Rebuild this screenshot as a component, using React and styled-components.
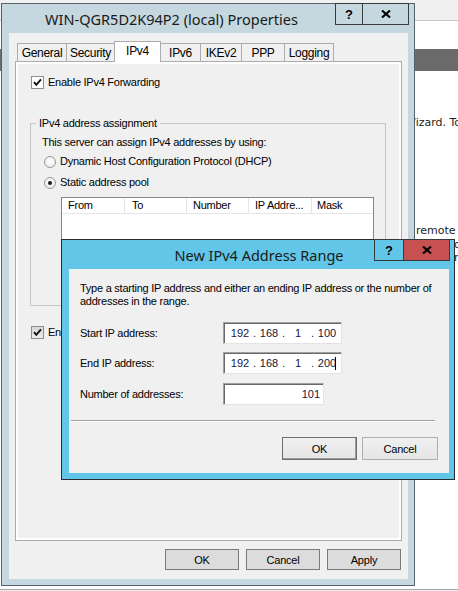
import React from "react";
import styled, { createGlobalStyle } from "styled-components";

const UI = `"Liberation Sans", Arial, sans-serif`;
const TITLE = `"Noto Sans", "Open Sans", sans-serif`;

const GlobalStyle = createGlobalStyle`
  html, body { margin: 0; padding: 0; background: #fff; }
  body { font-family: ${UI}; font-size: 11px; color: #000; }
  * { box-sizing: border-box; }
`;

/* ---------- desktop behind ---------- */
const Desktop = styled.div`
  position: relative;
  width: 458px;
  height: 591px;
  overflow: hidden;
  background: #fff;
  display: flex;
  flex-direction: column;
`;
const TopStrip = styled.div`
  flex: none;
  height: 21px;
  background: #f0f0f0;
  border-bottom: 1px solid #c9c9c9;
`;
const Spacer = styled.div`
  flex: none;
  height: ${(p) => p.$h}px;
`;
const DarkBar = styled.div`
  flex: none;
  height: 22px;
  background: #6b6b6b;
`;
const BgBody = styled.div`
  flex: 1;
  display: flex;
  flex-direction: column;
  font-family: "DejaVu Sans", sans-serif;
  font-size: 11px;
  line-height: 13px;
  color: #1e1e1e;
`;
const BgText = styled.div`
  margin-top: ${(p) => p.$mt}px;
  padding-left: ${(p) => p.$ml}px;
  white-space: nowrap;
  overflow: hidden;
`;
const BgFooter = styled.div`
  margin-top: auto;
  height: 2px;
  border-top: 1px solid #a8a8a8;
  background: #f0f0f0;
`;

/* ---------- windows ---------- */
const Window = styled.div`
  position: absolute;
  left: ${(p) => p.$x}px;
  top: ${(p) => p.$y}px;
  width: ${(p) => p.$w}px;
  height: ${(p) => p.$h}px;
  border: 1px solid ${(p) => p.$edge};
  background: ${(p) => p.$frame};
  padding: 0 ${(p) => p.$pr}px ${(p) => p.$pb}px ${(p) => p.$pl}px;
  display: flex;
  flex-direction: column;
`;
const TitleBar = styled.div`
  flex: none;
  height: 29px;
  display: flex;
  align-items: center;
  justify-content: center;
  padding-right: ${(p) => p.$pr || 0}px;
  font-family: ${TITLE};
  font-size: 14.5px;
  color: #1b1b1b;
  white-space: nowrap;
`;
const CaptionButtons = styled.div`
  position: absolute;
  top: -1px;
  right: ${(p) => p.$right}px;
  display: flex;
`;
const CaptionButton = styled.div`
  width: ${(p) => p.$w}px;
  height: 22px;
  border: 1px solid #3a3a3a;
  background: ${(p) => p.$bg};
  display: flex;
  align-items: center;
  justify-content: center;
  font-family: ${UI};
  font-weight: bold;
  font-size: 13px;
  color: #000;
  & + & {
    margin-left: -1px;
  }
`;

const CloseGlyph = () => (
  <svg width="10" height="8" viewBox="0 0 10 8">
    <path d="M1 0.5 L9 7.5 M9 0.5 L1 7.5" stroke="#000" strokeWidth="2.1" />
  </svg>
);

const Client = styled.div`
  flex: 1;
  background: #f0f0f0;
  display: flex;
  flex-direction: column;
  padding: ${(p) => p.$pad};
`;

/* ---------- tabs ---------- */
const TabStrip = styled.div`
  flex: none;
  height: 20px;
  display: flex;
  align-items: flex-end;
  padding-left: 2px;
`;
const Tab = styled.div`
  position: relative;
  width: ${(p) => p.$w}px;
  height: ${(p) => (p.$active ? 21 : 18)}px;
  margin-bottom: ${(p) => (p.$active ? -1 : 0)}px;
  z-index: ${(p) => (p.$active ? 2 : 1)};
  border: 1px solid #acacac;
  border-bottom: none;
  background: ${(p) => (p.$active ? "#fff" : "#f0f0f0")};
  display: flex;
  align-items: center;
  justify-content: center;
  padding-bottom: ${(p) => (p.$active ? 3 : 0)}px;
  font-size: 12px;
  letter-spacing: -0.3px;
  & + & {
    margin-left: -1px;
  }
`;
const Panel = styled.div`
  flex: none;
  height: 480px;
  border: 1px solid #acacac;
  background: #f0f0f0;
  box-shadow: inset 0 0 0 2px #fff;
  padding: 14px 0 0 14px;
  display: flex;
  flex-direction: column;
`;

/* ---------- controls ---------- */
const Label = styled.span`
  font-size: 11px;
  line-height: 13px;
  letter-spacing: -0.25px;
  white-space: nowrap;
`;
const CheckRow = styled.div`
  display: flex;
  align-items: center;
  gap: 4px;
  height: 13px;
  margin-left: 1px;
  margin-top: ${(p) => p.$mt || 0}px;
`;
const CheckBox = styled.span`
  flex: none;
  width: 13px;
  height: 13px;
  border: 1px solid #8e8e8e;
  background: ${(p) => (p.$shade ? "linear-gradient(#d8d8d8, #ececec)" : "#fff")};
  display: flex;
  align-items: center;
  justify-content: center;
`;
const CheckMark = () => (
  <svg width="11" height="11" viewBox="0 0 11 11">
    <path d="M2 5.2 L4.3 7.8 L9 2.4" stroke="#111" strokeWidth="1.9" fill="none" />
  </svg>
);

const GroupBox = styled.fieldset`
  margin: ${(p) => p.$mt}px 0 0 0;
  padding: 0 0 0 11px;
  width: 356px;
  height: 189px;
  min-width: 0;
  border: 1px solid #c6c6c6;
  display: flex;
  flex-direction: column;
`;
const Legend = styled.legend`
  margin-left: -6px;
  padding: 0 3px;
  font-size: 11px;
  line-height: 13px;
  letter-spacing: -0.25px;
`;
const Para = styled.div`
  margin-top: ${(p) => p.$mt || 0}px;
  font-size: 11px;
  line-height: 13px;
  letter-spacing: -0.25px;
  white-space: nowrap;
`;
const RadioRow = styled.div`
  display: flex;
  align-items: center;
  gap: 4px;
  height: 13px;
  margin: ${(p) => p.$mt}px 0 0 2px;
`;
const Radio = styled.span`
  flex: none;
  width: 12px;
  height: 12px;
  border-radius: 50%;
  border: 1px solid #9a9a9a;
  background: radial-gradient(circle at 50% 40%, #ffffff, #e6e6e6);
  display: flex;
  align-items: center;
  justify-content: center;
  &::after {
    content: "";
    display: ${(p) => (p.$checked ? "block" : "none")};
    width: 4px;
    height: 4px;
    border-radius: 50%;
    background: #1a1a1a;
  }
`;

const ListView = styled.div`
  margin: 8px 0 0 19px;
  width: 313px;
  height: 100px;
  border: 1px solid #828790;
  background: #fff;
`;
const ListHeader = styled.div`
  display: flex;
  height: 16px;
  border-bottom: 1px solid #e5e5e5;
`;
const HeaderCell = styled.div`
  flex: none;
  width: ${(p) => p.$w}px;
  padding-left: ${(p) => p.$pl}px;
  border-right: ${(p) => (p.$last ? "none" : "1px solid #e5e5e5")};
  font-size: 11px;
  line-height: 15px;
  letter-spacing: -0.25px;
  white-space: nowrap;
`;

const ButtonRow = styled.div`
  flex: none;
  display: flex;
  justify-content: flex-end;
  gap: ${(p) => p.$gap}px;
  margin-top: ${(p) => p.$mt}px;
  padding-right: ${(p) => p.$pr || 0}px;
`;
const PushButton = styled.div`
  width: ${(p) => p.$w}px;
  height: ${(p) => p.$h}px;
  border: 1px solid ${(p) => p.$border};
  background: ${(p) => p.$bg};
  box-shadow: ${(p) => (p.$default ? "inset -1px -1px 0 #9a9a9a" : "none")};
  display: flex;
  align-items: center;
  justify-content: center;
  font-size: 11px;
  letter-spacing: -0.2px;
`;

/* ---------- dialog body ---------- */
const FieldRow = styled.div`
  display: flex;
  align-items: center;
  height: 22px;
  margin-top: ${(p) => p.$mt}px;
`;
const FieldLabel = styled.span`
  width: 143px;
  font-size: 11px;
  letter-spacing: -0.25px;
`;
const Field = styled.div`
  position: relative;
  width: ${(p) => p.$w}px;
  height: 22px;
  background: #fff;
  border: 1px solid;
  border-color: #a0a0a0 #e3e3e3 #e3e3e3 #a0a0a0;
  box-shadow: inset 1px 1px 0 #696969;
  display: flex;
  align-items: center;
  justify-content: ${(p) => (p.$right ? "flex-end" : "flex-start")};
  padding: ${(p) => (p.$right ? "0 3px 0 0" : "0 0 0 5px")};
  font-size: 11px;
  color: #15153c;
`;
const Octet = styled.span`
  width: 22px;
  text-align: center;
`;
const Dot = styled.span`
  width: 7px;
  text-align: center;
`;
const Caret = styled.span`
  width: 1px;
  height: 13px;
  background: #000;
  margin-left: -3px;
`;
const Separator = styled.div`
  height: 2px;
  margin: 15px 3px 0 -9px;
  border-top: 1px solid #a0a0a0;
  background: #fff;
`;

const IpField = ({ parts, caret }) => (
  <Field $w={119}>
    {parts.map((p, i) => (
      <React.Fragment key={i}>
        {i > 0 && <Dot>.</Dot>}
        <Octet>{p}</Octet>
      </React.Fragment>
    ))}
    {caret && <Caret />}
  </Field>
);

export default function App() {
  const tabs = [
    ["General", 50],
    ["Security", 49],
    ["IPv4", 47, true],
    ["IPv6", 41],
    ["IKEv2", 42],
    ["PPP", 44],
    ["Logging", 50],
  ];
  const cols = [
    ["From", 63, 6],
    ["To", 62, 7],
    ["Number", 62, 6],
    ["IP Addre...", 63, 6],
    ["Mask", 61, 5, true],
  ];
  return (
    <>
      <GlobalStyle />
      <Desktop>
        <TopStrip />
        <Spacer $h={28} />
        <DarkBar />
        <BgBody>
          <BgText $mt={45} $ml={405}>Wizard. To configure</BgText>
          <BgText $mt={95} $ml={416}>remote access</BgText>
          <BgText $mt={1} $ml={454}>c</BgText>
          <BgText $mt={0} $ml={454}>r</BgText>
          <BgFooter />
        </BgBody>

        <Window $x={1} $y={3} $w={414} $h={583} $edge="#56626b" $frame="#c5d8df" $pl={7} $pr={6} $pb={6}>
          <TitleBar $pr={74}>WIN-QGR5D2K94P2 (local) Properties</TitleBar>
          <CaptionButtons $right={5}>
            <CaptionButton $w={28} $bg="#c5d8df">?</CaptionButton>
            <CaptionButton $w={47} $bg="#c5d8df">
              <CloseGlyph />
            </CaptionButton>
          </CaptionButtons>
          <Client $pad="8px 6px 0 6px">
            <TabStrip>
              {tabs.map(([t, w, a]) => (
                <Tab key={t} $w={w} $active={a}>
                  {t}
                </Tab>
              ))}
            </TabStrip>
            <Panel>
              <CheckRow>
                <CheckBox>
                  <CheckMark />
                </CheckBox>
                <Label>Enable IPv4 Forwarding</Label>
              </CheckRow>
              <GroupBox $mt={28}>
                <Legend>IPv4 address assignment</Legend>
                <Para $mt={6}>This server can assign IPv4 addresses by using:</Para>
                <RadioRow $mt={6}>
                  <Radio />
                  <Label>Dynamic Host Configuration Protocol (DHCP)</Label>
                </RadioRow>
                <RadioRow $mt={8}>
                  <Radio $checked />
                  <Label>Static address pool</Label>
                </RadioRow>
                <ListView>
                  <ListHeader>
                    {cols.map(([c, w, pl, last]) => (
                      <HeaderCell key={c} $w={w} $pl={pl} $last={last}>
                        {c}
                      </HeaderCell>
                    ))}
                  </ListHeader>
                </ListView>
              </GroupBox>
              <CheckRow $mt={20}>
                <CheckBox $shade>
                  <CheckMark />
                </CheckBox>
                <Label>Enable broadcast name resolution</Label>
              </CheckRow>
            </Panel>
            <ButtonRow $gap={7} $mt={8} $pr={1}>
              <PushButton $w={74} $h={21} $border="#7a7a7a" $bg="#dcdcdc">OK</PushButton>
              <PushButton $w={74} $h={21} $border="#7a7a7a" $bg="#dcdcdc">Cancel</PushButton>
              <PushButton $w={74} $h={21} $border="#7a7a7a" $bg="#dcdcdc">Apply</PushButton>
            </ButtonRow>
          </Client>
        </Window>

        <Window $x={61} $y={239} $w={394} $h={241} $edge="#2b2b2b" $frame="#62c6e8" $pl={7} $pr={5} $pb={6}>
          <TitleBar>New IPv4 Address Range</TitleBar>
          <CaptionButtons $right={4}>
            <CaptionButton $w={30} $bg="#62c6e8">?</CaptionButton>
            <CaptionButton $w={47} $bg="#c75050">
              <CloseGlyph />
            </CaptionButton>
          </CaptionButtons>
          <Client $pad="0 11px">
            <Para $mt={13}>
              Type a starting IP address and either an ending IP address or the number of
            </Para>
            <Para>addresses in the range.</Para>
            <FieldRow $mt={14}>
              <FieldLabel>Start IP address:</FieldLabel>
              <IpField parts={["192", "168", "1", "100"]} />
            </FieldRow>
            <FieldRow $mt={8}>
              <FieldLabel>End IP address:</FieldLabel>
              <IpField parts={["192", "168", "1", "200"]} caret />
            </FieldRow>
            <FieldRow $mt={9}>
              <FieldLabel>Number of addresses:</FieldLabel>
              <Field $w={101} $right>101</Field>
            </FieldRow>
            <Separator />
            <ButtonRow $gap={5} $mt={15}>
              <PushButton $w={75} $h={23} $border="#6e6e6e" $bg="linear-gradient(#f0f0f0, #e5e5e5)" $default>
                OK
              </PushButton>
              <PushButton $w={76} $h={23} $border="#adadad" $bg="linear-gradient(#f0f0f0, #e5e5e5)">
                Cancel
              </PushButton>
            </ButtonRow>
          </Client>
        </Window>
      </Desktop>
    </>
  );
}
